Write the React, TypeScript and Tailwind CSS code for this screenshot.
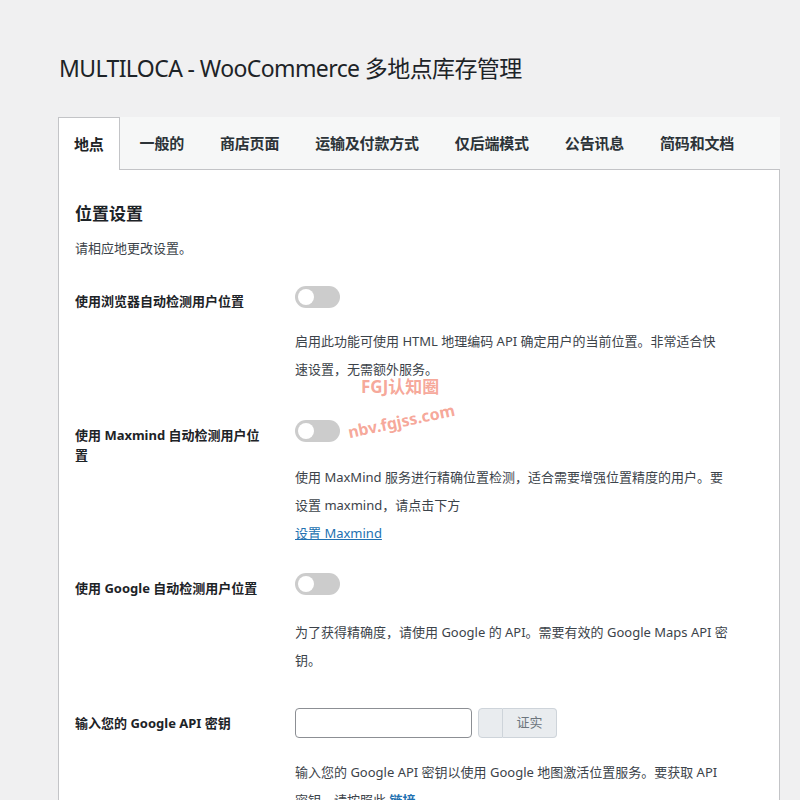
import React from "react";

const tabs = ["地点", "一般的", "商店页面", "运输及付款方式", "仅后端模式", "公告讯息", "简码和文档"];

const Toggle: React.FC = () => (
  <div className="relative w-[45px] h-[22px] rounded-full bg-[#cccccc]">
    <span className="absolute left-[3px] top-[3px] w-[16px] h-[16px] rounded-full bg-white" />
  </div>
);

type RowProps = {
  label: React.ReactNode;
  control: React.ReactNode;
  rowClass: string;
  descClass: string;
  children: React.ReactNode;
};

const SettingRow: React.FC<RowProps> = ({ label, control, rowClass, descClass, children }) => (
  <div className={`flex ${rowClass}`}>
    <div className="w-[190px] mr-[30px] pt-[20px] text-[13px] leading-[20px] font-bold text-[#1d2327]">
      {label}
    </div>
    <div className="flex-1 pt-[15px]">
      {control}
      <div className={`text-[13px] leading-[28px] text-[#3c434a] ${descClass}`}>{children}</div>
    </div>
  </div>
);

const App: React.FC = () => {
  return (
    <div
      className="min-h-[800px] bg-[#f0f0f1] pt-[53px] pl-[58px] pr-[20px]"
      style={{ fontFamily: '"Noto Sans", "Noto Sans CJK SC", sans-serif' }}
    >
      <h1 className="pl-px text-[23px] leading-[30px] font-normal tracking-[-0.6px] text-[#1d2327]">
        MULTILOCA - WooCommerce 多地点库存管理
      </h1>

      <div className="mt-[34px] flex h-[53px] gap-[4px] bg-[#f6f7f7] border-b border-[#c3c4c7]">
        {tabs.map((tab, i) => (
          <div
            key={tab}
            className={
              i === 0
                ? "-mb-px flex items-center px-[15px] border border-b-0 border-[#c3c4c7] bg-white text-[15px] font-semibold tracking-[-0.2px] text-[#1d2327]"
                : "flex items-center px-[15px] border border-transparent text-[15px] font-semibold tracking-[-0.2px] text-[#2c3338]"
            }
          >
            {tab}
          </div>
        ))}
      </div>

      <div className="relative bg-white border border-t-0 border-[#c3c4c7] pl-[16px] pr-[16px] pt-[32px] pb-[40px]">
        <h2 className="text-[17px] leading-[24px] font-bold text-[#1d2327]">位置设置</h2>
        <p className="mt-[12px] text-[13px] leading-[20px] text-[#3c434a]">请相应地更改设置。</p>

        <div className="mt-[13px]">
          <SettingRow
            label="使用浏览器自动检测用户位置"
            control={<Toggle />}
            rowClass="pb-[22px]"
            descClass="mt-[19px]"
          >
            启用此功能可使用 HTML 地理编码 API 确定用户的当前位置。非常适合快
            <br />
            速设置，无需额外服务。
          </SettingRow>

          <SettingRow
            label="使用 Maxmind 自动检测用户位置"
            control={<Toggle />}
            rowClass="pb-[11px]"
            descClass="mt-[21px]"
          >
            使用 MaxMind 服务进行精确位置检测，适合需要增强位置精度的用户。要
            <br />
            设置 maxmind，请点击下方
            <br />
            <a className="text-[#2271b1] underline">设置 Maxmind</a>
          </SettingRow>

          <SettingRow
            label="使用 Google 自动检测用户位置"
            control={<Toggle />}
            rowClass="pb-[19px]"
            descClass="mt-[23px]"
          >
            为了获得精确度，请使用 Google 的 API。需要有效的 Google Maps API 密
            <br />
            钥。
          </SettingRow>

          <SettingRow
            label="输入您的 Google API 密钥"
            control={
              <div className="flex items-center h-[30px]">
                <input
                  type="text"
                  className="w-[177px] h-[30px] rounded-[4px] border border-[#8c8f94] bg-white"
                />
                <span className="ml-[6px] w-[25px] h-[30px] rounded-l-[4px] border border-[#ced4da] bg-[#e9ecef]" />
                <button className="w-[54px] h-[30px] rounded-r-[4px] border border-l-0 border-[#ced4da] bg-[#e9ecef] text-[13px] text-[#6c757d]">
                  证实
                </button>
              </div>
            }
            rowClass="pb-[10px]"
            descClass="mt-[20px]"
          >
            输入您的 Google API 密钥以使用 Google 地图激活位置服务。要获取 API
            <br />
            密钥，请按照此 <a className="font-bold text-[#2271b1] underline">链接</a>
          </SettingRow>
        </div>

        <div className="absolute left-[288px] top-[207px] pointer-events-none select-none">
          <div className="pl-[14px] text-[17px] leading-[20px] font-bold text-[#f4917f]/80">FGJ认知圈</div>
          <div className="mt-[14px] -rotate-[12deg] text-[16px] leading-[20px] font-bold text-[#f4917f]/80">
            nbv.fgjss.com
          </div>
        </div>
      </div>
    </div>
  );
};

export default App;
